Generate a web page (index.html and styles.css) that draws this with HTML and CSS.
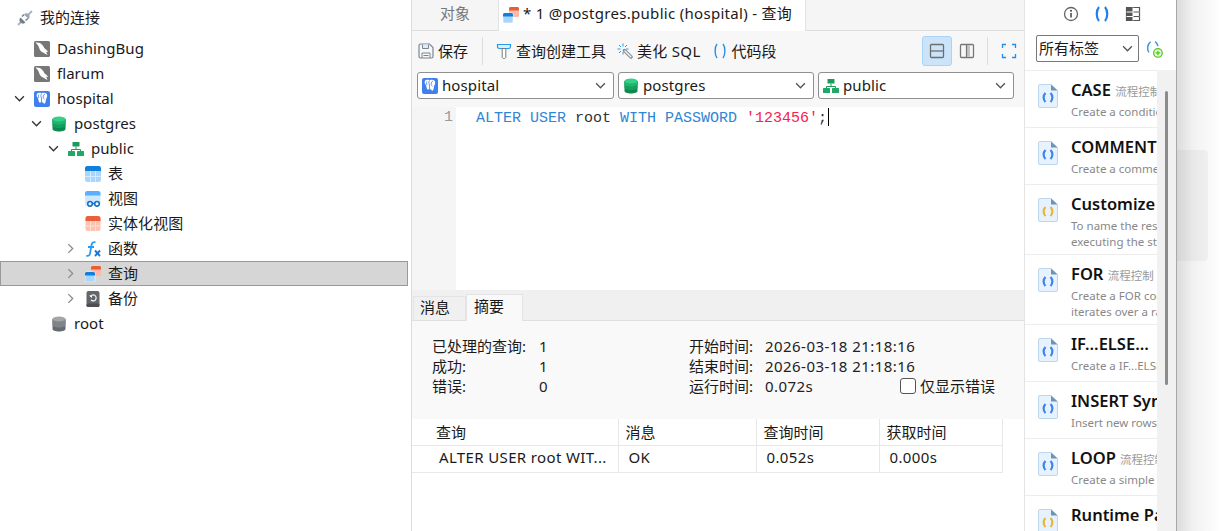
FILE: index.html
```html
<!DOCTYPE html>
<html lang="zh">
<head>
<meta charset="utf-8">
<title>查询</title>
<link rel="stylesheet" href="styles.css">
</head>
<body>
<svg class="defs" aria-hidden="true">
  <symbol id="i-mysql" viewBox="0 0 16 16"><rect width="16" height="16" rx="1.500" fill="#777"/><path d="M1.500 1.500c3.500-.3 6 1 7.500 3.200.7 1.200 1.200 2.200 2.300 3.300.8.800 2 1.500 3.200 3-1-.2-1.800-.2-2.300.1.400 1 .9 1.800 1.300 2.900-2-1.200-3.500-1.900-5-2.700C6 10 5.500 8 5 6.500 4.300 4.500 3 3 1.500 1.500z" fill="#fff"/></symbol>
  <symbol id="i-pg" viewBox="0 0 16 16"><rect width="16" height="16" rx="2" fill="#3f7fee"/><path d="M3.500 2.300c1.500-.8 3-.6 4.300-.1 1.600-.7 3.700-.5 4.800.6 1 1.200.6 3.500-.4 5-.4 1.200-.3 3-1.100 4.500-.7.800-1.800.3-2-1-.8.300-1.600.1-2-.5-.5 1-1.500 1.200-2 .2-.7-1.500-.5-3-1.500-4.500C2.300 5.500 2.300 3.500 3.500 2.300z" fill="#fff"/><path d="M7.500 2.500c-.8 1.500-.8 3 0 4.500v4M11 3c-1.200.5-1.800 1.500-1.800 3 0 1 .3 1.800 1.300 2.200M4.800 3.500c-.6 1-.5 2.500.2 3.500" stroke="#3f7fee" stroke-width=".8" fill="none"/></symbol>
  <symbol id="i-db" viewBox="0 0 16 16"><path d="M1.500 3v10c0 1.400 2.900 2.500 6.500 2.500s6.500-1.100 6.500-2.500V3z" fill="#0b8a4c"/><path d="M1.500 3v6.500C1.500 10.900 4.400 12 8 12s6.500-1.100 6.500-2.500V3z" fill="#13a05c"/><path d="M1.500 3v3C1.500 7.400 4.400 8.500 8 8.500s6.500-1.100 6.500-2.500V3z" fill="#1fb56d"/><ellipse cx="8" cy="3" rx="6.500" ry="2.500" fill="#35d087"/></symbol>
  <symbol id="i-db-gray" viewBox="0 0 16 16"><path d="M1.500 3v10c0 1.400 2.900 2.500 6.500 2.500s6.500-1.100 6.500-2.500V3z" fill="#666b72"/><path d="M1.500 3v6c0 1.400 2.900 2.500 6.500 2.500s6.500-1.100 6.500-2.500V3z" fill="#808489"/><ellipse cx="8" cy="3" rx="6.500" ry="2.500" fill="#a3a5a8"/></symbol>
  <symbol id="i-schema" viewBox="0 0 16 16"><rect x="4.500" y="1" width="7" height="4.500" rx=".6" fill="#1a9a5c"/><path d="M8 5.500v3M3.500 10V8.500h9V10" stroke="#1a9a5c" fill="none"/><rect x="0" y="10" width="7" height="5" rx=".6" fill="#1fa866"/><rect x="9" y="10" width="7" height="5" rx=".6" fill="#1fa866"/></symbol>
  <symbol id="i-table" viewBox="0 0 16 16"><rect width="16" height="16" rx="2.500" fill="#a9d6ff"/><path d="M0 2.500A2.500 2.500 0 0 1 2.500 0h11A2.500 2.500 0 0 1 16 2.500V5H0z" fill="#1180dc"/><path d="M5.500 5v11M10.500 5v11M0 10.500h16" stroke="#d5ebff" stroke-width="1"/></symbol>
  <symbol id="i-view" viewBox="0 0 16 16"><rect y="0" width="15.500" height="15" rx="2.500" fill="#cfe7ff"/><path d="M0 2.500A2.500 2.500 0 0 1 2.500 0h10.500A2.500 2.500 0 0 1 15.500 2.500V4.500H0z" fill="#5aafff"/><circle cx="5" cy="12.800" r="2.300" fill="#fff" stroke="#1173c9" stroke-width="1.600"/><circle cx="12" cy="12.800" r="2.300" fill="#fff" stroke="#1173c9" stroke-width="1.600"/><path d="M7 12.500h3" stroke="#1173c9" stroke-width="1.400"/></symbol>
  <symbol id="i-mview" viewBox="0 0 16 16"><rect x=".5" width="15" height="15" rx="2.500" fill="#ffc2b0"/><path d="M.5 2.500A2.500 2.500 0 0 1 3 0h10a2.500 2.500 0 0 1 2.500 2.500V5H.5z" fill="#e9603a"/><path d="M5.500 5v10M10.500 5v10M.5 10h15" stroke="#ffe0d6"/></symbol>
  <symbol id="i-fx" viewBox="0 0 16 16"><path d="M10.500 1.300C8.300.6 7 1.800 6.500 4L5 12.500c-.4 2-1.500 2.700-3.700 2.200M3 6h6" stroke="#2b9bf0" stroke-width="1.800" fill="none"/><path d="M10 9.500l5 5.500M15 9.500l-5 5.500" stroke="#1b78d2" stroke-width="1.900"/></symbol>
  <symbol id="i-query" viewBox="0 0 16 16"><rect x="6" y="0" width="10" height="10" rx="1.500" fill="#ffb9a4"/><path d="M6 1.500A1.500 1.500 0 0 1 7.500 0h7A1.500 1.500 0 0 1 16 1.500V3.500H6z" fill="#e85d36"/><rect x="0" y="6" width="10" height="10" rx="1.500" fill="#a9d6ff" stroke="#fff" stroke-width=".6"/><path d="M0 7.500A1.500 1.500 0 0 1 1.500 6h7A1.500 1.500 0 0 1 10 7.500V9.500H0z" fill="#1180dc"/></symbol>
  <symbol id="i-backup" viewBox="0 0 16 16"><rect x="1.500" width="13" height="16" rx="2" fill="#63676c"/><rect x="1.500" y="12.500" width="13" height="3.500" rx="1.500" fill="#4b4e52"/><path d="M5.500 5.500A3 3 0 1 1 6 9" stroke="#fff" stroke-width="1.100" fill="none"/><path d="M4 4.500h3v2.500" fill="#fff"/></symbol>
  <symbol id="i-plug" viewBox="0 0 16 16"><path d="M1 15l3-3M11.500 4.500L15 1" stroke="#a9b4bf" stroke-width="1.800"/><path d="M3.500 7.500L8.500 12.500C7 14 5 14 3.500 12.500S2 9 3.500 7.500z" fill="#727e8a"/><path d="M7 4.500L11.500 9C13 7.500 13 5.500 11.700 4.300 10.300 3 8.500 3 7 4.500z" fill="#9aa6b2"/><path d="M5 6.500L7 4.500M8.500 10.500L11 8.500" stroke="#727e8a" stroke-width="1.500"/></symbol>
  <symbol id="i-save" viewBox="0 0 16 16"><path d="M1 2.500A1.500 1.500 0 0 1 2.500 1h9L15 4.500v9a1.500 1.500 0 0 1-1.500 1.500h-11A1.500 1.500 0 0 1 1 13.500z" fill="none" stroke="#7d8690" stroke-width="1.200"/><path d="M4.500 1.500v4h6v-4" fill="#d9ecfb" stroke="#7d8690"/><path d="M4 15v-5h8v5" fill="none" stroke="#7d8690"/><path d="M5.500 12.500h5" stroke="#3a94e6"/></symbol>
  <symbol id="i-builder" viewBox="0 0 16 16"><path d="M1.500 1.500h13v2.500c0 1-1 1.500-2 1.500H3.500c-1 0-2-.5-2-1.500z" fill="#d9f0ff" stroke="#2a9ae8" stroke-width="1.200"/><path d="M6.200 5.500h3.600v8.500c0 .9-.8 1.500-1.800 1.500S6.200 14.900 6.200 14z" fill="#fff" stroke="#747a80"/></symbol>
  <symbol id="i-beautify" viewBox="0 0 16 16"><path d="M7.500 7.500l6.500 6.500" stroke="#82888e" stroke-width="3.400" stroke-linecap="round"/><path d="M8 8l5.800 5.800" stroke="#f0f0f0" stroke-width="1.600" stroke-linecap="round"/><path d="M6 .5v3M6 9v2.500M.5 6h3M9 6h2.500M2 2l2 2M2 10l2-2M10 2L8 4" stroke="#2a9ae8"/></symbol>
  <symbol id="i-snippet" viewBox="0 0 16 16"><path d="M5 1C2.500 4 2.500 12 5 15M11 1c2.500 3 2.500 11 0 14" fill="none" stroke="#2a8fea" stroke-width="1.400"/></symbol>
  <symbol id="i-split-h" viewBox="0 0 16 16"><rect x="1.500" y="1.500" width="13" height="13" rx="1" fill="none" stroke="#6e6e6e" stroke-width="1.300"/><path d="M1.500 8h13" stroke="#6e6e6e" stroke-width="1.300"/></symbol>
  <symbol id="i-split-v" viewBox="0 0 16 16"><rect x="1.500" y="1.500" width="13" height="13" rx="1" fill="none" stroke="#777" stroke-width="1.300"/><rect x="7.500" y="2" width="3.500" height="12" fill="#c4c4c4"/><path d="M7.500 1.500v13" stroke="#777" stroke-width="1.200"/></symbol>
  <symbol id="i-full" viewBox="0 0 16 16"><path d="M1.500 5V1.500H5M11 1.500h3.500V5M14.500 11v3.500H11M5 14.500H1.500V11" fill="none" stroke="#1e8ff0" stroke-width="1.300"/></symbol>
  <symbol id="i-info" viewBox="0 0 16 16"><circle cx="8" cy="8" r="6.500" fill="none" stroke="#666" stroke-width="1.300"/><path d="M8 7v4.500" stroke="#555" stroke-width="1.700"/><circle cx="8" cy="4.800" r="1.100" fill="#555"/></symbol>
  <symbol id="i-paren" viewBox="0 0 16 16"><path d="M5 1C2 4.500 2 11.500 5 15M11 1c3 3.500 3 10.500 0 14" fill="none" stroke="#1e80f0" stroke-width="2.200"/></symbol>
  <symbol id="i-grid" viewBox="0 0 16 16"><path d="M1.500 1.500h13v13h-13z" fill="#fff" stroke="#555" stroke-width="1.200"/><path d="M1.500 1.500H8V15H1.500z" fill="#555"/><path d="M1.500 6h13M1.500 10.500h13M8 1.500v13" stroke="#fff" stroke-width="1"/><path d="M8.500 6h6M8.500 10.500h6" stroke="#555" stroke-width="1"/></symbol>
  <symbol id="i-add" viewBox="0 0 16 16"><path d="M5 1.500C2 4 1.500 8 3.500 11M9 1.500c1.500 1 2.200 2.500 2.500 4" fill="none" stroke="#3a94e6" stroke-width="1.300"/><circle cx="11.500" cy="11.500" r="3.800" fill="#e8f9dc" stroke="#52c41a" stroke-width="1.100"/><path d="M9.500 11.500h4M11.500 9.500v4" stroke="#52c41a" stroke-width="1.100"/></symbol>
  <symbol id="i-chev-d" viewBox="0 0 10 10"><path d="M1 3l4 4 4-4" fill="none" stroke="currentColor" stroke-width="1.200"/></symbol>
  <symbol id="i-chev-r" viewBox="0 0 10 10"><path d="M3 1l4 4-4 4" fill="none" stroke="currentColor" stroke-width="1.200"/></symbol>
  <symbol id="i-snip-blue" viewBox="0 0 20 24"><path d="M.5 2A1.500 1.500 0 0 1 2 .5h11l6.500 6V22a1.500 1.500 0 0 1-1.500 1.500H2A1.500 1.500 0 0 1 .5 22z" fill="#e6f3ff" stroke="#bcd6ee"/><path d="M13 .5l6.500 6H13z" fill="#6e93b5"/><path d="M7.500 9c-2.500 2.500-2.500 6.500 0 9M12.500 9c2.500 2.500 2.500 6.500 0 9" fill="none" stroke="#3e83ee" stroke-width="2.200"/></symbol>
  <symbol id="i-snip-yellow" viewBox="0 0 20 24"><path d="M.5 2A1.500 1.500 0 0 1 2 .5h11l6.500 6V22a1.500 1.500 0 0 1-1.500 1.500H2A1.500 1.500 0 0 1 .5 22z" fill="#e6f3ff" stroke="#bcd6ee"/><path d="M13 .5l6.500 6H13z" fill="#6e93b5"/><path d="M7.500 9c-2.500 2.500-2.500 6.500 0 9M12.500 9c2.500 2.500 2.500 6.500 0 9" fill="none" stroke="#e8b53c" stroke-width="2.200"/></symbol>
</svg>

<div class="app">
  <aside class="sidebar">
    <div class="conn-head"><svg class="ico"><use href="#i-plug"/></svg><span>我的连接</span></div>
    <ul class="tree">
      <li class="node d0"><span class="tw"></span><svg class="ico"><use href="#i-mysql"/></svg><span>DashingBug</span></li>
      <li class="node d0"><span class="tw"></span><svg class="ico"><use href="#i-mysql"/></svg><span>flarum</span></li>
      <li class="node d0"><svg class="tw dark"><use href="#i-chev-d"/></svg><svg class="ico"><use href="#i-pg"/></svg><span>hospital</span></li>
      <li class="node d1"><svg class="tw dark"><use href="#i-chev-d"/></svg><svg class="ico"><use href="#i-db"/></svg><span>postgres</span></li>
      <li class="node d2"><svg class="tw dark"><use href="#i-chev-d"/></svg><svg class="ico"><use href="#i-schema"/></svg><span>public</span></li>
      <li class="node d3"><span class="tw"></span><svg class="ico"><use href="#i-table"/></svg><span>表</span></li>
      <li class="node d3"><span class="tw"></span><svg class="ico"><use href="#i-view"/></svg><span>视图</span></li>
      <li class="node d3"><span class="tw"></span><svg class="ico"><use href="#i-mview"/></svg><span>实体化视图</span></li>
      <li class="node d3"><svg class="tw"><use href="#i-chev-r"/></svg><svg class="ico"><use href="#i-fx"/></svg><span>函数</span></li>
      <li class="node d3 selected"><svg class="tw"><use href="#i-chev-r"/></svg><svg class="ico"><use href="#i-query"/></svg><span>查询</span></li>
      <li class="node d3"><svg class="tw"><use href="#i-chev-r"/></svg><svg class="ico"><use href="#i-backup"/></svg><span>备份</span></li>
      <li class="node d1"><span class="tw"></span><svg class="ico"><use href="#i-db-gray"/></svg><span>root</span></li>
    </ul>
  </aside>

  <main class="main">
    <div class="tabs">
      <div class="tab">对象</div>
      <div class="tab active"><svg class="ico"><use href="#i-query"/></svg><span>* 1 @postgres.public (hospital) - 查询</span></div>
    </div>
    <div class="toolbar">
      <button class="tool t-save"><svg class="ico"><use href="#i-save"/></svg>保存</button>
      <span class="sep"></span>
      <button class="tool"><svg class="ico"><use href="#i-builder"/></svg>查询创建工具</button>
      <button class="tool"><svg class="ico"><use href="#i-beautify"/></svg><span class="wide">美化 SQL</span></button>
      <button class="tool"><svg class="ico"><use href="#i-snippet"/></svg>代码段</button>
      <span class="grow"></span>
      <button class="square on"><svg class="ico"><use href="#i-split-h"/></svg></button>
      <button class="square"><svg class="ico"><use href="#i-split-v"/></svg></button>
      <span class="sep sep-r"></span>
      <button class="square"><svg class="ico"><use href="#i-full"/></svg></button>
    </div>
    <div class="selectors">
      <div class="select"><svg class="ico"><use href="#i-pg"/></svg><span>hospital</span><svg class="caret"><use href="#i-chev-d"/></svg></div>
      <div class="select"><svg class="ico"><use href="#i-db"/></svg><span>postgres</span><svg class="caret"><use href="#i-chev-d"/></svg></div>
      <div class="select"><svg class="ico"><use href="#i-schema"/></svg><span>public</span><svg class="caret"><use href="#i-chev-d"/></svg></div>
    </div>
    <div class="editor">
      <div class="gutter">1</div>
      <div class="code"><span class="kw">ALTER USER</span> root <span class="kw">WITH PASSWORD</span> <span class="str">'123456'</span>;<span class="cursor"></span></div>
    </div>
    <div class="rtabs">
      <div class="rtab">消息</div>
      <div class="rtab active">摘要</div>
    </div>
    <div class="summary">
      <dl class="stats s-left">
        <dt>已处理的查询:</dt><dd>1</dd>
        <dt>成功:</dt><dd>1</dd>
        <dt>错误:</dt><dd>0</dd>
      </dl>
      <dl class="stats s-right">
        <dt>开始时间:</dt><dd>2026-03-18 21:18:16</dd>
        <dt>结束时间:</dt><dd>2026-03-18 21:18:16</dd>
        <dt>运行时间:</dt><dd>0.072s</dd>
      </dl>
      <label class="only-err"><span class="box"></span>仅显示错误</label>
    </div>
    <table class="result">
      <thead><tr><th class="c1">查询</th><th class="c2">消息</th><th class="c3">查询时间</th><th class="c4">获取时间</th></tr></thead>
      <tbody><tr><td>ALTER USER root WIT...</td><td>OK</td><td>0.052s</td><td>0.000s</td></tr></tbody>
    </table>
  </main>

  <section class="panel">
    <div class="panel-icons">
      <svg class="ico"><use href="#i-info"/></svg>
      <svg class="ico"><use href="#i-paren"/></svg>
      <svg class="ico"><use href="#i-grid"/></svg>
    </div>
    <div class="panel-filter">
      <div class="tagsel"><span>所有标签</span><svg class="caret"><use href="#i-chev-d"/></svg></div>
      <svg class="ico"><use href="#i-add"/></svg>
    </div>
    <div class="snips">
      <div class="snip-list">
        <article class="snip"><svg class="sico"><use href="#i-snip-blue"/></svg><div class="stext"><h3>CASE <small>流程控制</small></h3><p>Create a conditional</p></div></article>
        <article class="snip"><svg class="sico"><use href="#i-snip-blue"/></svg><div class="stext"><h3>COMMENT</h3><p>Create a comment</p></div></article>
        <article class="snip two"><svg class="sico"><use href="#i-snip-yellow"/></svg><div class="stext"><h3>Customize</h3><p>To name the result<br>executing the statement</p></div></article>
        <article class="snip two"><svg class="sico"><use href="#i-snip-blue"/></svg><div class="stext"><h3>FOR <small>流程控制</small></h3><p>Create a FOR condition<br>iterates over a range</p></div></article>
        <article class="snip"><svg class="sico"><use href="#i-snip-blue"/></svg><div class="stext"><h3>IF...ELSE...</h3><p>Create a IF...ELSE</p></div></article>
        <article class="snip"><svg class="sico"><use href="#i-snip-blue"/></svg><div class="stext"><h3>INSERT Syntax</h3><p>Insert new rows into</p></div></article>
        <article class="snip"><svg class="sico"><use href="#i-snip-blue"/></svg><div class="stext"><h3>LOOP <small>流程控制</small></h3><p>Create a simple loop</p></div></article>
        <article class="snip"><svg class="sico"><use href="#i-snip-yellow"/></svg><div class="stext"><h3>Runtime Parameter</h3></div></article>
      </div>
      <div class="track"><div class="thumb"></div></div>
    </div>
  </section>

  <div class="backdrop"><div class="ghost-card"></div></div>
</div>
</body>
</html>
```

FILE: styles.css
```css
* { box-sizing: border-box; }
html, body { margin: 0; height: 100%; overflow: hidden; background: #fff; }
body { font: 15px/20px "Noto Sans", "Noto Sans CJK SC", sans-serif; color: #1a1a1a; }
.defs { display: none; }
ul, dl, dd, h3, p { margin: 0; padding: 0; }
button { font: inherit; color: inherit; background: none; border: 0; padding: 0; }
.ico { width: 16px; height: 16px; flex: none; display: block; }

.app { display: grid; grid-template-columns: 412px 613px 152px 44px; height: 531px; overflow: hidden; }

/* sidebar */
.sidebar { border-right: 1px solid #dcdcdc; padding-top: 8px; }
.conn-head { display: flex; align-items: center; gap: 7px; height: 20px; padding-left: 17px; font-size: 15px; }
.conn-head span { margin-top: -2px; }
.tree { list-style: none; margin-top: 8px; }
.node { display: flex; align-items: center; height: 25px; width: 408px; }
.node > span:last-child { margin-top: -2px; letter-spacing: .05px; }
.tw { width: 11px; height: 11px; margin-right: 9px; flex: none; color: #8c8c8c; }
.tw.dark { color: #333; }
.node > .ico { margin-right: 7px; }
.d0 { padding-left: 14px; }
.d1 { padding-left: 31px; }
.d2 { padding-left: 48px; }
.d3 { padding-left: 65px; }
.d3.selected { padding-left: 64px; background: #d6d6d6; border: 1px solid #999; }

/* main */
.main { display: flex; flex-direction: column; min-width: 0; border-right: 1px solid #e4e4e4; background: #fff; }
.tabs { display: flex; height: 31px; background: #f5f5f5; border-bottom: 1px solid #dedede; }
.tab { width: 86px; text-align: center; line-height: 27px; color: #777; font-size: 15px; }
.tab.active { width: 308px; display: flex; align-items: center; gap: 4px; padding: 0 0 2px 4px; margin-bottom: -1px; background: #fff; color: #1a1a1a; border-left: 1px solid #e2e2e2; border-right: 1px solid #e2e2e2; letter-spacing: .3px; }
.tab.active span { margin-top: -2px; }
.toolbar { display: flex; align-items: center; height: 40px; padding: 0 0 0 6px; background: #f7f7f7; }
.tool { display: flex; align-items: center; gap: 4px; margin-right: 11px; white-space: nowrap; }
.t-save { margin-right: 14px; }
.wide { letter-spacing: .3px; }
.toolbar .sep { width: 1px; height: 28px; background: #ddd; margin-right: 13px; flex: none; }
.toolbar .sep-r { margin: 0 6px 0 5px; }
.grow { flex: 1; }
.square { width: 30px; height: 30px; display: flex; align-items: center; justify-content: center; border-radius: 3px; border: 1px solid transparent; }
.square.on { background: #cce4f9; border-color: #a9d4f6; }
.selectors { display: flex; gap: 4px; padding: 1px 5px 8px; background: #f7f7f7; height: 36px; }
.select { width: 197px; height: 27px; display: flex; align-items: center; gap: 4px; padding: 0 5px 0 4px; background: #fff; border: 1px solid #8f8f8f; border-radius: 3px; }
.select:nth-child(2), .select:nth-child(3) { width: 196px; }
.select span { flex: 1; margin-top: -2px; letter-spacing: .1px; }
.caret { width: 11px; height: 11px; margin-right: 2px; color: #555; flex: none; }
.editor { display: flex; height: 183px; background: #fff; font: 15px/20px "Liberation Mono", monospace; }
.gutter { width: 44px; padding: 1px 3px 0 0; text-align: right; background: #f5f5f5; color: #999; }
.code { padding: 1px 0 0 20px; white-space: pre; color: #333; }
.kw { color: #2f86d6; }
.str { color: #f5204f; }
.cursor { display: inline-block; width: 1px; height: 18px; margin-left: 1px; background: #000; vertical-align: -4px; }
.rtabs { display: flex; align-items: flex-end; height: 31px; padding-left: 1px; background: #f0f0f0; border-bottom: 1px solid #e0e0e0; }
.rtab { width: 53px; height: 24px; line-height: 20px; padding-left: 6px; border: 1px solid #e4e4e4; border-bottom: 0; }
.rtab.active { width: 57px; height: 27px; margin-bottom: -1px; padding-left: 7px; line-height: 22px; background: #f9f9f9; }
.summary { display: flex; height: 98px; padding: 15px 0 0 20px; background: #f9f9f9; position: relative; }
.stats { display: grid; grid-auto-rows: 20px; align-content: start; }
.stats dd { color: #222; letter-spacing: .45px; }
.s-left { grid-template-columns: 107px auto; width: 257px; }
.s-right { grid-template-columns: 76px auto; }
.only-err { display: flex; align-items: center; gap: 4px; position: absolute; left: 488px; top: 55px; height: 20px; }
.box { width: 16px; height: 16px; border: 1px solid #555; border-radius: 3px; background: #fff; }
.result { width: 590px; table-layout: fixed; border-collapse: collapse; }
.result th, .result td { border: 1px solid #e8e8e8; border-top: 0; border-left: 0; text-align: left; font-weight: 400; white-space: nowrap; overflow: hidden; }
.result th { height: 26px; padding: 1px 0 0 7px; }
.result td { height: 27px; padding: 0 0 4px 10px; letter-spacing: .36px; }
.result th.c1 { width: 206px; padding-left: 24px; }
.result td:first-child { padding-left: 27px; }
.result th.c2 { width: 138px; }
.result th.c3, .result th.c4 { width: 123px; }

/* right panel */
.panel { display: flex; flex-direction: column; background: #fff; border-right: 1px solid #a8a8a8; }
.panel-icons { display: flex; justify-content: center; gap: 15px; height: 35px; padding: 6px 0 0 2px; }
.panel-filter { display: flex; align-items: center; gap: 6px; height: 27px; padding-left: 11px; }
.panel-filter > .ico { width: 18px; height: 18px; }
.tagsel { width: 103px; height: 27px; display: flex; align-items: center; justify-content: space-between; border: 1px solid #777; border-radius: 2px; padding: 0 3px 0 2px; }
.tagsel span { margin-top: -2px; }
.snips { display: flex; flex: 1; margin-top: 8px; min-height: 0; }
.snip-list { width: 132px; overflow: hidden; border-top: 1px solid #ededed; }
.snip { display: flex; width: 260px; height: 57px; padding: 9px 0 0 13px; border-bottom: 1px solid #ededed; }
.snip.two { height: 70px; }
.sico { width: 20px; height: 24px; flex: none; margin-top: 4px; }
.stext { margin-left: 13px; }
.snip h3 { height: 20px; font-size: 16.5px; line-height: 20px; font-weight: 600; color: #111; white-space: nowrap; }
.snip small { font-size: 11.5px; line-height: 1; font-weight: 400; color: #999; }
.snip p { font-size: 11.5px; line-height: 16px; color: #888; margin-top: 4px; white-space: nowrap; }
.track { width: 19px; background: #f1f1f1; padding: 21px 0 0 8px; }
.thumb { width: 3px; height: 294px; background: #8c8c8c; border-radius: 2px; }

/* backdrop */
.backdrop { padding-top: 150px; background: linear-gradient(90deg, #dcdcdc 0, #f1f1f1 16px, #fbfbfb 36px, #fff 44px); }
.ghost-card { width: 31px; height: 111px; background: rgba(0,0,0,.035); border-radius: 0 4px 4px 0; }
```
